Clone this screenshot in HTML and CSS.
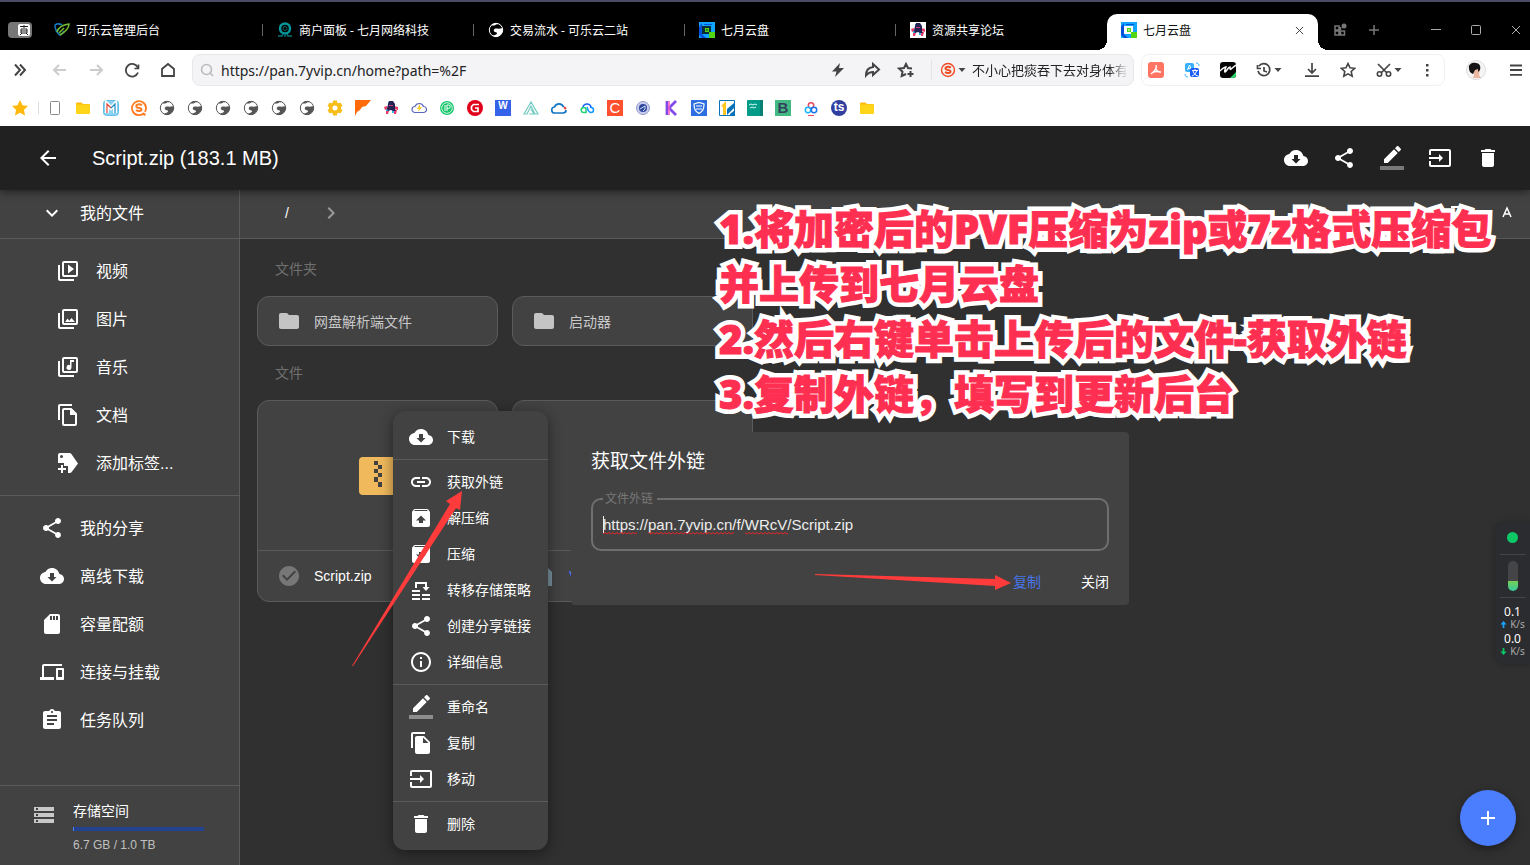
FILE: index.html
```html
<!DOCTYPE html>
<html lang="zh-CN">
<head>
<meta charset="utf-8">
<title>七月云盘</title>
<link rel="stylesheet" href="styles.css">
</head>
<body>
<svg class="sprite" aria-hidden="true">
  <symbol id="back" viewBox="0 0 24 24"><path d="M20 11H7.83l5.59-5.59L12 4l-8 8 8 8 1.41-1.41L7.83 13H20v-2z"/></symbol>
  <symbol id="cloud" viewBox="0 0 24 24"><path fill-rule="evenodd" d="M19.35 10.04C18.67 6.59 15.64 4 12 4 9.11 4 6.6 5.64 5.35 8.04 2.34 8.36 0 10.91 0 14c0 3.31 2.69 6 6 6h13c2.76 0 5-2.24 5-5 0-2.64-2.05-4.78-4.65-4.96zM16.5 13L12 17.5 7.5 13H10V9h4v4z"/></symbol>
  <symbol id="share" viewBox="0 0 24 24"><path d="M18 16.08c-.76 0-1.44.3-1.96.77L8.91 12.7c.05-.23.09-.46.09-.7s-.04-.47-.09-.7l7.05-4.11c.54.5 1.25.81 2.04.81 1.66 0 3-1.34 3-3s-1.34-3-3-3-3 1.34-3 3c0 .24.04.47.09.7L8.04 9.81C7.5 9.31 6.79 9 6 9c-1.66 0-3 1.34-3 3s1.34 3 3 3c.79 0 1.5-.31 2.04-.81l7.12 4.16c-.05.21-.08.43-.08.65 0 1.61 1.31 2.92 2.92 2.92s2.92-1.31 2.92-2.92-1.31-2.92-2.92-2.92z"/></symbol>
  <symbol id="rename" viewBox="0 0 24 24"><path d="M17.75 7L14 3.25l-10 10V17h3.75l10-10zm2.96-2.96c.39-.39.39-1.02 0-1.41L18.37.29c-.39-.39-1.02-.39-1.41 0L15 2.25 18.75 6l1.96-1.96z"/><path fill-opacity=".4" d="M0 20h24v4H0z"/></symbol>
  <symbol id="move" viewBox="0 0 24 24"><path d="M21 3H3c-1.1 0-2 .9-2 2v4h2V5h18v14H3v-4H1v4c0 1.1.9 2 2 2h18c1.1 0 2-.9 2-2V5c0-1.1-.9-2-2-2zM11 16l4-4-4-4v3H1v2h10v3z"/></symbol>
  <symbol id="trash" viewBox="0 0 24 24"><path d="M6 19c0 1.1.9 2 2 2h8c1.1 0 2-.9 2-2V7H6v12zM19 4h-3.5l-1-1h-5l-1 1H5v2h14V4z"/></symbol>
  <symbol id="down" viewBox="0 0 24 24"><path d="M7.41 8.59L12 13.17l4.59-4.58L18 10l-6 6-6-6z"/></symbol>
  <symbol id="right" viewBox="0 0 24 24"><path d="M10 6L8.59 7.41 13.17 12l-4.58 4.59L10 18l6-6z"/></symbol>
  <symbol id="folder" viewBox="0 0 24 24"><path d="M10 4H4c-1.1 0-2 .9-2 2v12c0 1.1.9 2 2 2h16c1.1 0 2-.9 2-2V8c0-1.1-.9-2-2-2h-8l-2-2z"/></symbol>
  <symbol id="video" viewBox="0 0 24 24"><path d="M4 6H2v14c0 1.1.9 2 2 2h14v-2H4z"/><rect x="7" y="3" width="14" height="14" rx="1" fill="none" stroke="currentColor" stroke-width="2"/><path d="M12 14.500V5.500l6 4.500z"/></symbol>
  <symbol id="image" viewBox="0 0 24 24"><path d="M4 6H2v14c0 1.100.9 2 2 2h14v-2H4z"/><rect x="7" y="3" width="14" height="14" rx="1" fill="none" stroke="currentColor" stroke-width="2"/><path d="M9 15l2.500-3.500 1.800 2.200L15.500 11l3.500 4z"/></symbol>
  <symbol id="music" viewBox="0 0 24 24"><path d="M4 6H2v14c0 1.100.9 2 2 2h14v-2H4z"/><rect x="7" y="3" width="14" height="14" rx="1" fill="none" stroke="currentColor" stroke-width="2"/><path d="M14 5h4v2h-2.500v5.500a2.500 2.500 0 1 1-1.500-2.300z"/></symbol>
  <symbol id="doc" viewBox="0 0 24 24"><path d="M16 1H4c-1.100 0-2 .9-2 2v14h2V3h12z"/><path d="M8 6h7l5 5v10a1 1 0 0 1-1 1H8a1 1 0 0 1-1-1V7a1 1 0 0 1 1-1z" fill="none" stroke="currentColor" stroke-width="2"/><path d="M14 6v6h6z"/></symbol>
  <symbol id="tag" viewBox="0 0 24 24"><path fill-rule="evenodd" d="M2 12V4c0-1.100.9-2 2-2h9.500c.7 0 1.300.3 1.700.8L22 12.500l-6.500 8.700c-.4.500-1 .8-1.700.8H12v-7H8v-3zM5.500 4a1.500 1.500 0 1 0 0 3 1.500 1.500 0 0 0 0-3z"/><path d="M5 14h2v3h3v2H7v3H5v-3H2v-2h3z"/></symbol>
  <symbol id="sd" viewBox="0 0 24 24"><path d="M18 2h-8L4 8v12c0 1.100.9 2 2 2h12c1.100 0 2-.9 2-2V4c0-1.100-.9-2-2-2zm-6 6h-2V4h2v4zm3 0h-2V4h2v4zm3 0h-2V4h2v4z"/></symbol>
  <symbol id="devices" viewBox="0 0 24 24"><path d="M4 6h18V4H4c-1.100 0-2 .9-2 2v11H0v3h14v-3H4V6zm19 2h-6c-.55 0-1 .45-1 1v10c0 .55.45 1 1 1h6c.55 0 1-.45 1-1V9c0-.55-.45-1-1-1zm-1 9h-4v-7h4v7z"/></symbol>
  <symbol id="tasks" viewBox="0 0 24 24"><path d="M19 3h-4.180C14.400 1.840 13.300 1 12 1s-2.400.84-2.820 2H5c-1.100 0-2 .9-2 2v14c0 1.100.9 2 2 2h14c1.100 0 2-.9 2-2V5c0-1.100-.9-2-2-2zm-7 0c.55 0 1 .45 1 1s-.45 1-1 1-1-.45-1-1 .45-1 1-1zm2 14H7v-2h7v2zm3-4H7v-2h10v2zm0-4H7V7h10v2z"/></symbol>
  <symbol id="storage" viewBox="0 0 24 24"><path d="M2 20h20v-4H2v4zm2-3h2v2H4v-2zM2 4v4h20V4H2zm4 3H4V5h2v2zm-4 7h20v-4H2v4zm2-3h2v2H4v-2z"/></symbol>
  <symbol id="link" viewBox="0 0 24 24"><path d="M3.900 12c0-1.710 1.390-3.100 3.100-3.100h4V7H7c-2.760 0-5 2.240-5 5s2.240 5 5 5h4v-1.900H7c-1.710 0-3.100-1.390-3.100-3.100zM8 13h8v-2H8v2zm9-6h-4v1.900h4c1.710 0 3.100 1.390 3.100 3.100s-1.390 3.100-3.100 3.100h-4V17h4c2.760 0 5-2.240 5-5s-2.240-5-5-5z"/></symbol>
  <symbol id="unzip" viewBox="0 0 24 24"><path fill-rule="evenodd" d="M20.550 5.220l-1.390-1.680C18.880 3.210 18.470 3 18 3H6c-.47 0-.88.210-1.150.55L3.460 5.220C3.170 5.570 3 6.010 3 6.500V19c0 1.100.9 2 2 2h14c1.100 0 2-.9 2-2V6.500c0-.49-.17-.93-.45-1.280zM12 9.500l5 5h-3V17h-4v-2.500H7zM5.120 5l.82-1h12l.93 1z"/></symbol>
  <symbol id="zip" viewBox="0 0 24 24"><path fill-rule="evenodd" d="M20.550 5.220l-1.390-1.680C18.880 3.210 18.470 3 18 3H6c-.47 0-.88.210-1.150.55L3.460 5.220C3.170 5.570 3 6.010 3 6.500V19c0 1.100.9 2 2 2h14c1.100 0 2-.9 2-2V6.500c0-.49-.17-.93-.45-1.280zM12 17.500l-5-5h3V10h4v2.500h3zM5.120 5l.82-1h12l.93 1z"/></symbol>
  <symbol id="transfer" viewBox="0 0 24 24"><path d="M3 20h8v2H3zM13 20h8v2h-8zM3 16h8v2H3zM13 16h8v2h-8zM3 12h8v2H3zM6 4h12v5h2.500L17 13l-3.500-4H16V6H8v4H6z"/></symbol>
  <symbol id="info" viewBox="0 0 24 24"><path d="M11 17h2v-6h-2v6zm1-15C6.480 2 2 6.480 2 12s4.480 10 10 10 10-4.480 10-10S17.520 2 12 2zm0 18c-4.410 0-8-3.590-8-8s3.590-8 8-8 8 3.590 8 8-3.590 8-8 8zM11 9h2V7h-2v2z"/></symbol>
  <symbol id="copy" viewBox="0 0 24 24"><path d="M16 1H4c-1.100 0-2 .9-2 2v14h2V3h12V1zm-1 4l6 6v10c0 1.100-.9 2-2 2H8c-1.100 0-2-.9-2-2V7c0-1.100.9-2 2-2h7zm-1 7h5.500L14 6.500V12z"/></symbol>
  <symbol id="check" viewBox="0 0 24 24"><path d="M12 2C6.480 2 2 6.480 2 12s4.480 10 10 10 10-4.480 10-10S17.520 2 12 2zm-2 15l-5-5 1.410-1.410L10 14.170l7.590-7.590L19 8l-9 9z"/></symbol>
  <symbol id="add" viewBox="0 0 24 24"><path d="M19 13h-6v6h-2v-6H5v-2h6V5h2v6h6v2z"/></symbol>
  <symbol id="globe" viewBox="0 0 16 16"><circle cx="8" cy="8" r="6.700" fill="none" stroke="currentColor" stroke-width="1"/><path d="M3 3.500C5 1.300 8.500.8 11 2c-2 .2-3 .3-4 1.200C5.800 4 4.500 3.400 3 3.500zM14.700 6.500c.5 4.500-3 8.300-7 8.200-1.500-.1-2.500-.6-3.500-1.300 2.500.2 4.200-.5 4.800-1.800.3-1-.8-1.200-2-1.500C5.500 9.700 5.300 8 6.500 7c1-.9 2.500-.4 4-.3 1.500.1 3-.8 4.200-.2z"/></symbol>
  <symbol id="pan" viewBox="0 0 16 16"><path fill="#12a5ff" d="M0 0h16v10h-5v6H0z"/><path fill="#0450d8" d="M0 5l3-4v11l4 4H3L0 13zM5 2h8v1H5z"/><path fill="var(--eye)" d="M3 4h9v8H3z"/><path fill="#52d512" d="M6 6h4v4H6zM10 10h6v6h-6z"/><path fill="var(--eye)" d="M7.300 7.300h1.400v1.400H7.300z"/></symbol>
  <symbol id="robot" viewBox="0 0 16 16"><path fill="#ec3a68" d="M1 7l3-1 1 3-3 1zM11 6l4 1v3l-3-1zM3 11h3l-1 3H3zM11 10h3l-1 4h-2z"/><path fill="#35b5ee" d="M5 2h5v2H5zM3 9h3v2H3zM9 10h2v3H9z"/><path fill="#252354" d="M6 1h4l2 3v5l1 2h-3l-2-1-3 1-1-2 1-5z"/><path fill="#c93c72" d="M6 5h4v1H6z"/></symbol>
  <symbol id="caret" viewBox="0 0 8 8"><path d="M.5 2h7L4 6z"/></symbol>
  <symbol id="bfolder" viewBox="0 0 16 16"><path fill="#ffb80f" d="M1 3.500a1 1 0 0 1 1-1h4.500L8 4h6a1 1 0 0 1 1 1v2H1z"/><rect x="1" y="4.500" width="14" height="9.500" rx="1" fill="#ffd519"/></symbol>
</svg>

<header class="browser">
  <div class="tabs">
    <svg class="workspace" viewBox="0 0 24 16"><rect width="24" height="16" rx="4" fill="#777"/><rect x="10" y="2" width="12" height="12" rx="2" fill="#fff"/><path d="M12 4.500h8M16 3v3M13 7h6v4h-6zM13 9h6M14 11l-2 2M18 11l2 2" fill="none" stroke="#222"/></svg>
    <div class="tab first"><svg class="fav" viewBox="0 0 16 16"><path d="M8 3C5 1 2 2 1 3c0 5 2 8 5 10 2-1 3-2 4-4" fill="none" stroke="#1577b8" stroke-width="1.600"/><path d="M3 10C4 6 8 3 15 2c0 5-4 8-9 11M5 11l5-5" fill="none" stroke="#74bb31" stroke-width="1.500"/></svg><span>可乐云管理后台</span></div>
    <div class="tab"><svg class="fav" viewBox="0 0 16 16"><circle cx="8" cy="6.500" r="5" fill="none" stroke="#06969b" stroke-width="2.500"/><circle cx="8" cy="6.500" r="2" fill="none" stroke="#05666b"/><path d="M1 14h4l1-2M15 14h-4l-1-2M7 14h2" fill="none" stroke="#067579" stroke-width="1.500"/></svg><span>商户面板 - 七月网络科技</span></div>
    <div class="tab"><svg class="fav white"><use href="#globe"/></svg><span>交易流水 - 可乐云二站</span></div>
    <div class="tab"><svg class="fav eye-dark"><use href="#pan"/></svg><span>七月云盘</span></div>
    <div class="tab"><svg class="fav robot"><use href="#robot"/></svg><span>资源共享论坛</span></div>
    <div class="tab active"><svg class="fav eye-light"><use href="#pan"/></svg><span>七月云盘</span><button class="plain close" aria-label="关闭标签"><svg viewBox="0 0 10 10"><path d="M1 1l8 8M9 1L1 9" stroke="#333" fill="none"/></svg></button></div>
    <div class="tabtools">
      <svg class="fav" viewBox="0 0 16 16"><path d="M3 4h4v4H3zM3 9h4v4H3zM8.500 9h4v4h-4zM8.500 8V5" fill="none" stroke="#777" stroke-width="1.500"/><circle cx="12" cy="4" r="2.500" fill="#777"/></svg>
      <svg class="fav" viewBox="0 0 16 16"><path d="M8 3v10M3 8h10" stroke="#777" stroke-width="1.500"/></svg>
    </div>
    <div class="wintools">
      <svg class="fav" viewBox="0 0 16 16"><path d="M3 7.500h10" stroke="#aaa"/></svg>
      <svg class="fav" viewBox="0 0 16 16"><rect x="3.500" y="3.500" width="9" height="9" rx="1" fill="none" stroke="#aaa"/></svg>
      <svg class="fav" viewBox="0 0 16 16"><path d="M4 4l8 8M12 4l-8 8" stroke="#aaa"/></svg>
    </div>
  </div>

  <div class="toolbar">
    <nav class="nav">
      <svg viewBox="0 0 20 20"><path d="M5 4.500l5 5.500-5 5.500M10 4.500l5 5.500-5 5.500" stroke-width="2"/></svg>
      <svg class="dim nav-back" viewBox="0 0 20 20"><path d="M16 10H5M9 5l-5 5 5 5"/></svg>
      <svg class="dim" viewBox="0 0 20 20"><path d="M4 10h11M11 5l5 5-5 5"/></svg>
      <svg viewBox="0 0 20 20"><path d="M16 8A6.300 6.300 0 1 0 16 12.500" stroke-width="1.800"/><path d="M12.500 8.500h4v-4" stroke-width="1.600"/></svg>
      <svg viewBox="0 0 20 20"><path d="M4 9v7h12V9l-6-5z" stroke-width="1.800"/></svg>
    </nav>
    <div class="address">
      <svg class="mag" viewBox="0 0 16 16"><circle cx="7.500" cy="7.500" r="5" fill="none" stroke="#bbb" stroke-width="1.600"/><path d="M11 11l3 3" stroke="#bbb" stroke-width="1.600"/></svg>
      <input class="url" aria-label="地址" value="https://pan.7yvip.cn/home?path=%2F">
      <div class="addricons">
        <svg viewBox="0 0 18 18"><path fill="#444" d="M11 2L3 10.500h4.500L6 16l9-9H10z"/></svg>
        <svg viewBox="0 0 18 18"><path d="M10 3l6 5.500-6 5.500v-3C7 11 5 12 3 14.500 3 10 5.500 6.500 10 6z"/></svg>
        <svg viewBox="0 0 18 18"><path d="M15 7.500L11 7 9 3 7 7l-5 .5 3.500 3.200-.8 4.300L9 13M13.500 10v6M10.500 13h6"/></svg>
      </div>
      <div class="search">
        <svg class="fav" viewBox="0 0 16 16"><circle cx="8" cy="8" r="6.500" fill="none" stroke="#f04b23" stroke-width="1.400"/><path d="M11 5.500C8 4 5 5 5.500 6.800 6 8.500 10.500 7.500 10.500 9.500S7 11.500 5 10.200" fill="none" stroke="#f04b23" stroke-width="2"/></svg>
        <svg class="caret"><use href="#caret"/></svg>
        <span class="hot">不小心把痰吞下去对身体有</span>
      </div>
    </div>
    <div class="ext">
      <svg viewBox="0 0 16 16"><rect width="16" height="16" rx="3" fill="#ff7463"/><path d="M8 3c1 2-.5 6-5 9M8 7c1 3 3 3 5 3M4 11c3-2 5-2 8-1" fill="none" stroke="#fff" stroke-width="1.400"/></svg>
      <svg viewBox="0 0 16 16"><rect x="1" y="1" width="9" height="9" rx="2" fill="#36b0ff"/><path d="M3.500 8l2-5 2 5M4 6.500h3" fill="none" stroke="#fff"/><path d="M12 1c2 0 3 1 3 3M1 12c0 2 1 3 3 3" fill="none" stroke="#36b0ff"/><rect x="6" y="6" width="9" height="9" rx="2" fill="#1a5cf5"/><path d="M8 8.500h6M11 7v1.500M12.500 9c-1 3-2 4-4.500 5M9 9c1 3 2 4 5 5" fill="none" stroke="#fff"/></svg>
      <svg viewBox="0 0 16 16"><rect width="16" height="16" rx="3" fill="#050505"/><path fill="#28d568" d="M16 10v3a3 3 0 0 1-3 3h-3z"/><path d="M0 9c3-3 4-4 6-4-1 2-2 4-1 5 2-1 3-5 5-5 0 2 0 3 1 2l5-4" fill="none" stroke="#fff" stroke-width="1.500"/></svg>
      <span class="pair"><svg viewBox="0 0 16 16"><path d="M3 4a6 6 0 1 1-1 5M1.500 3v3.500H5M8 5v4l3 1" fill="none" stroke="#444" stroke-width="1.700"/></svg><svg class="caret"><use href="#caret"/></svg></span>
      <svg viewBox="0 0 16 16"><path d="M8 1v10M4 7l4 4 4-4M1 14.200h14" fill="none" stroke="#444" stroke-width="1.700"/></svg>
      <svg viewBox="0 0 16 16"><path d="M8 1.500l2 4.300 4.700.5-3.500 3.200 1 4.700L8 11.800l-4.200 2.400 1-4.700L1.300 6.300 6 5.800z" fill="none" stroke="#444" stroke-width="1.600"/></svg>
      <span class="pair"><svg viewBox="0 0 16 16"><path d="M2 2l9 9M14 2l-9 9" stroke="#444" stroke-width="1.700"/><circle cx="3.500" cy="12" r="2.200" fill="none" stroke="#444" stroke-width="1.600"/><circle cx="12.500" cy="12" r="2.200" fill="none" stroke="#444" stroke-width="1.600"/></svg><svg class="caret"><use href="#caret"/></svg></span>
      <svg class="dots" viewBox="0 0 16 16"><path fill="#444" d="M7 2h2.500v2.500H7zM7 7h2.500v2.500H7zM7 12h2.500v2.500H7z"/></svg>
    </div>
    <div class="account">
      <svg class="avatar" viewBox="0 0 20 20"><circle cx="10" cy="10" r="9.500" fill="#f5f5f5" stroke="#ddd"/><path fill="#eab8a3" d="M6 9h8l-1 6 2 3H7l1-3z"/><path fill="#141414" d="M3 8c-1-4 4-6 7-5 4 0 5 4 4 7l-2 2V9l-3 1-2 4C4 13 3 11 3 8z"/></svg>
      <svg viewBox="0 0 16 16"><path d="M2 3.500h12M2 8h12M2 12.800h12" stroke="#444" stroke-width="1.800"/></svg>
    </div>
  </div>

  <div class="bookmarks">
    <svg class="star" viewBox="0 0 16 16"><path fill="#ffb90e" d="M8 0l2.500 5.200L16 6l-4 3.800 1 5.800-5-2.800-5 2.800 1-5.800L0 6l5.500-.8z"/></svg>
    <i class="sep"></i>
    <svg viewBox="0 0 16 16"><rect x="3.500" y="1.500" width="9" height="13" rx="1" fill="none" stroke="#888"/></svg>
    <svg><use href="#bfolder"/></svg>
    <svg viewBox="0 0 16 16"><rect x=".5" y=".5" width="15" height="15" rx="3" fill="#8ad3f3" stroke="#64bde8"/><path d="M4 13V4l4 4 4-4v9" fill="none" stroke="#fff" stroke-width="4"/><path d="M4 13V4l4 4" fill="none" stroke="#e0493b" stroke-width="1.200"/><path d="M8 8l4-4v9" fill="none" stroke="#1e8dc8" stroke-width="1.200"/></svg>
    <svg viewBox="0 0 16 16"><path d="M13 13A7 7 0 1 1 15 8c0 2-.5 3-1 4" fill="none" stroke="#ff7b22" stroke-width="1.800"/><circle cx="13.500" cy="14.500" r="1.200" fill="#ff7b22"/><path d="M11 5C7 3.500 4.500 5 5.500 7c1 1.500 5 .5 5 2.500 0 2-3.500 2-5.500.7" fill="none" stroke="#ff7b22" stroke-width="2"/></svg>
    <svg class="grey"><use href="#globe"/></svg><svg class="grey"><use href="#globe"/></svg><svg class="grey"><use href="#globe"/></svg><svg class="grey"><use href="#globe"/></svg><svg class="grey"><use href="#globe"/></svg><svg class="grey"><use href="#globe"/></svg>
    <svg viewBox="0 0 16 16"><circle cx="8" cy="8" r="4.300" fill="none" stroke="#f7bd19" stroke-width="3.600"/><path d="M8 .5v3M8 12.500v3M1.500 4.200l3 1.800M14.500 4.200l-3 1.800M1.500 11.800l3-1.800M14.500 11.800l-3-1.800" stroke="#f7bd19" stroke-width="4"/></svg>
    <svg viewBox="0 0 16 16"><path fill="#ff6b0b" d="M0 0h16l-5 6-4 1-2 3-3 2-2 4z"/></svg>
    <svg><use href="#robot"/></svg>
    <svg viewBox="0 0 16 16"><path d="M4 12.500a3 3 0 0 1 0-6 4.500 4.500 0 0 1 8.500 0 3 3 0 0 1 0 6z" fill="none" stroke="#5c68bd" stroke-width="1.200"/><path fill="#ffc928" d="M9 4l-3 5h2l-1 3 4-5H9z"/></svg>
    <svg viewBox="0 0 16 16"><circle cx="8" cy="8" r="7" fill="#14c76a"/><circle cx="8" cy="8" r="5.300" fill="none" stroke="#fff" stroke-width=".8"/><path d="M6 5v6M8 11V5h1.500a1.500 1.500 0 0 1 0 3.500H8" fill="none" stroke="#fff"/></svg>
    <svg viewBox="0 0 16 16"><circle cx="8" cy="8" r="8" fill="#e1001a"/><path d="M12 4.500H6.500L4.500 6.500v3L6.500 11.500H11V8H8" fill="none" stroke="#fff" stroke-width="1.700"/></svg>
    <span class="tile blue">W</span>
    <svg viewBox="0 0 16 16"><path d="M1 14L8 2l7 12h-3L8 6l-4 8zM8 9l3 5H6" fill="none" stroke="#73cbc2" stroke-width="1.200"/></svg>
    <svg viewBox="0 0 16 16"><path d="M4 13a3 3 0 0 1-.5-6A4.800 4.800 0 0 1 12.500 7" fill="none" stroke="#1276c4" stroke-width="1.700"/><path d="M4 13h8a3 3 0 0 0 3-3" fill="none" stroke="#1276c4" stroke-width="1.700"/><path d="M13 7l2 2" stroke="#e23b3b" stroke-width="2"/></svg>
    <svg viewBox="0 0 16 16"><path d="M4 8a4 4 0 0 1 8 0" fill="none" stroke="#1463ff" stroke-width="1.700"/><path d="M7 12.500H5A2.500 2.500 0 1 1 7 9z" fill="none" stroke="#20d174" stroke-width="1.600"/><path d="M8 7c1 3 1 5.500 4 5.500a2.500 2.500 0 0 0 0-5" fill="none" stroke="#159bff" stroke-width="1.600"/></svg>
    <span class="tile red">C</span>
    <svg viewBox="0 0 16 16"><circle cx="8" cy="8" r="6.500" fill="#c8cdea" stroke="#929bd0"/><circle cx="8" cy="8" r="4" fill="#31459c"/><path d="M5 9l5-3v3l-2 2" stroke="#c9e1fa" fill="none"/></svg>
    <svg viewBox="0 0 16 16"><path d="M4 1v14M13 1L6 8l7 7" fill="none" stroke="#824be6" stroke-width="2.800"/><path d="M6 1v14" stroke="#ff5dc2" stroke-width="1.500"/></svg>
    <svg viewBox="0 0 16 16"><path fill="#2d6fe0" d="M0 0h16v16H0z"/><path d="M3 4l5-1.500L13 4c0 5-1 7-5 9.500C4 11 3 9 3 4zM5 6h6M5 9h6" fill="none" stroke="#fff" stroke-width="1.200"/></svg>
    <svg viewBox="0 0 16 16"><path fill="#fff" stroke="#0872b9" d="M.5.5h15v15H.5z"/><path fill="#ffc71e" d="M2 6l5-5v14H4V7z"/><path fill="#0872b9" d="M15 3v5l-7 7V9zM11 14l5-4v6h-5z"/></svg>
    <svg viewBox="0 0 16 16"><rect width="16" height="16" rx="1" fill="#049b89"/><path d="M2 5l2-1 2 1 2-1 2 1M3 8l2-1 2 1 2-1" fill="none" stroke="#d5fff5" stroke-width="1"/><path fill="#077f74" d="M13 0h3v16h-3z"/></svg>
    <span class="tile green">B</span>
    <svg viewBox="0 0 16 16"><circle cx="8" cy="5.500" r="2.700" fill="none" stroke="#ee4861" stroke-width="1.500"/><circle cx="5" cy="10" r="2.700" fill="none" stroke="#1db4ff" stroke-width="1.500"/><circle cx="11" cy="10" r="2.700" fill="none" stroke="#1675eb" stroke-width="1.500"/><path d="M5 15.500h6" stroke="#ee4861"/></svg>
    <span class="tile navy">ts</span>
    <svg><use href="#bfolder"/></svg>
  </div>
</header>

<div class="appbar">
  <button class="plain" aria-label="返回"><svg class="ic"><use href="#back"/></svg></button>
  <h1>Script.zip (183.1 MB)</h1>
  <div class="actions">
    <button class="plain" aria-label="下载"><svg class="ic"><use href="#cloud"/></svg></button>
    <button class="plain" aria-label="分享"><svg class="ic"><use href="#share"/></svg></button>
    <button class="plain" aria-label="重命名"><svg class="ic"><use href="#rename"/></svg></button>
    <button class="plain" aria-label="移动"><svg class="ic"><use href="#move"/></svg></button>
    <button class="plain" aria-label="删除"><svg class="ic"><use href="#trash"/></svg></button>
  </div>
</div>

<div class="workarea">
  <aside class="sidebar">
    <a class="side root" href="#"><svg class="ic"><use href="#down"/></svg><span>我的文件</span></a>
    <nav class="group sub">
      <a class="side" href="#"><svg class="ic"><use href="#video"/></svg><span>视频</span></a>
      <a class="side" href="#"><svg class="ic"><use href="#image"/></svg><span>图片</span></a>
      <a class="side" href="#"><svg class="ic"><use href="#music"/></svg><span>音乐</span></a>
      <a class="side" href="#"><svg class="ic"><use href="#doc"/></svg><span>文档</span></a>
      <a class="side" href="#"><svg class="ic"><use href="#tag"/></svg><span>添加标签...</span></a>
    </nav>
    <nav class="group">
      <a class="side" href="#"><svg class="ic"><use href="#share"/></svg><span>我的分享</span></a>
      <a class="side" href="#"><svg class="ic"><use href="#cloud"/></svg><span>离线下载</span></a>
      <a class="side" href="#"><svg class="ic"><use href="#sd"/></svg><span>容量配额</span></a>
      <a class="side" href="#"><svg class="ic"><use href="#devices"/></svg><span>连接与挂载</span></a>
      <a class="side" href="#"><svg class="ic"><use href="#tasks"/></svg><span>任务队列</span></a>
    </nav>
    <div class="quota">
      <svg class="ic"><use href="#storage"/></svg>
      <div class="quota-info"><span>存储空间</span><div class="bar"><i></i></div><small>6.7 GB / 1.0 TB</small></div>
    </div>
  </aside>

  <main class="files">
    <div class="crumbs"><a href="#">/</a><svg class="ic"><use href="#right"/></svg>
      <div class="viewtools"><svg class="ic" viewBox="0 0 24 24"><path d="M3 5h8v2H3zM13 5h8v2h-8zM3 11h18v2H3z"/></svg><svg class="ic" viewBox="0 0 24 24"><path d="M11 16l4-9 4 9M12.500 13h5" fill="none" stroke="currentColor" stroke-width="1.500"/></svg></div>
    </div>
    <section class="listing">
      <h2>文件夹</h2>
      <div class="cards">
        <article class="card folder"><svg class="ic"><use href="#folder"/></svg>网盘解析端文件</article>
        <article class="card folder"><svg class="ic"><use href="#folder"/></svg>启动器</article>
      </div>
      <h2>文件</h2>
      <div class="cards">
        <article class="card file">
          <div class="preview"><svg class="archive" viewBox="0 0 38 38"><rect width="38" height="38" rx="4" fill="#f0b95c"/><path fill="#424242" d="M15 4h4v4h-4zM19 8h4v4h-4zM15 12h4v4h-4zM19 16h4v4h-4zM15 20h4v5h-4zM19 25h4v5h-4z"/></svg></div>
          <footer><svg class="ic chosen"><use href="#check"/></svg>Script.zip</footer>
        </article>
        <article class="card file">
          <div class="preview"></div>
          <footer><svg class="ic filedoc" viewBox="0 0 24 24"><path d="M6 2h8l6 6v14H4V4c0-1 1-2 2-2z"/></svg><a href="#">V</a></footer>
        </article>
      </div>
    </section>
  </main>
</div>

<div class="menu" role="menu">
  <button class="item"><svg class="ic"><use href="#cloud"/></svg><span>下载</span></button>
  <hr>
  <button class="item"><svg class="ic"><use href="#link"/></svg><span>获取外链</span></button>
  <button class="item"><svg class="ic"><use href="#unzip"/></svg><span>解压缩</span></button>
  <button class="item"><svg class="ic"><use href="#zip"/></svg><span>压缩</span></button>
  <button class="item"><svg class="ic"><use href="#transfer"/></svg><span>转移存储策略</span></button>
  <button class="item"><svg class="ic"><use href="#share"/></svg><span>创建分享链接</span></button>
  <button class="item"><svg class="ic"><use href="#info"/></svg><span>详细信息</span></button>
  <hr>
  <button class="item"><svg class="ic"><use href="#rename"/></svg><span>重命名</span></button>
  <button class="item"><svg class="ic"><use href="#copy"/></svg><span>复制</span></button>
  <button class="item"><svg class="ic"><use href="#move"/></svg><span>移动</span></button>
  <hr>
  <button class="item"><svg class="ic"><use href="#trash"/></svg><span>删除</span></button>
</div>

<div class="dialog" role="dialog" aria-labelledby="dlg">
  <h2 id="dlg">获取文件外链</h2>
  <fieldset>
    <legend><label for="outlink">文件外链</label></legend>
    <input id="outlink" value="https://pan.7yvip.cn/f/WRcV/Script.zip">
    <svg class="spell" viewBox="0 0 260 22">
      <defs><pattern id="wave" width="4" height="3" patternUnits="userSpaceOnUse"><path d="M0 2l2-1.500L4 2" fill="none" stroke="#e0262b"/></pattern></defs>
      <path d="M.5 2v17" stroke="#eee"/><path fill="url(#wave)" d="M0 18h34v3H0zM45 18h86v3H45zM142 18h43v3h-43z"/>
    </svg>
  </fieldset>
  <div class="dialog-actions"><button class="plain primary">复制</button><button class="plain">关闭</button></div>
</div>

<svg class="arrow arrow-menu" viewBox="0 0 112 176"><path fill="#ff3b3b" d="M110 0l-2 19-4-2L1 175H0L98 13l-4-3z"/></svg>
<svg class="arrow arrow-copy" viewBox="0 0 196 18"><path fill="#ff3b3b" d="M0 1l180 5V2l16 8-16 7v-4L0 2z"/></svg>

<div class="note">
  <p data-line="1.将加密后的PVF压缩为zip或7z格式压缩包">1.将加密后的PVF压缩为zip或7z格式压缩包</p>
  <p data-line="并上传到七月云盘">并上传到七月云盘</p>
  <p data-line="2.然后右键单击上传后的文件-获取外链">2.然后右键单击上传后的文件-获取外链</p>
  <p data-line="3.复制外链，填写到更新后台">3.复制外链，填写到更新后台</p>
</div>

<div class="monitor">
  <i class="dot"></i>
  <div class="gauge"><i></i></div>
  <div class="rate"><span>0.1</span><small><svg viewBox="0 0 8 8"><path fill="#18a4ff" d="M4 0l3.500 4H5v4H3V4H.5z"/></svg>K/s</small></div>
  <div class="rate"><span>0.0</span><small><svg viewBox="0 0 8 8"><path fill="#0cc866" d="M4 8l3.500-4H5V0H3v4H.5z"/></svg>K/s</small></div>
</div>
<button class="fab" aria-label="新建"><svg class="ic"><use href="#add"/></svg></button>
</body>
</html>
```

FILE: styles.css
```css
* { box-sizing: border-box; }
body {
  margin: 0;
  min-height: 100vh;
  display: flex;
  flex-direction: column;
  position: relative;
  overflow-x: hidden;
  background: #303030;
  color: #fff;
  font-family: "Liberation Sans", "Noto Sans CJK SC", sans-serif;
  font-size: 14px;
}
svg { flex: none; fill: currentColor; }
a { color: inherit; text-decoration: none; }
h1, h2, p { margin: 0; font-weight: 400; }
button { font: inherit; color: inherit; }
.sprite { position: absolute; width: 0; height: 0; }
.plain { border: 0; padding: 0; background: none; display: flex; }
.ic { width: 24px; height: 24px; }

/* browser chrome */
.browser { position: relative; z-index: 1; background: #fff; color: #222; font-family: "Noto Sans", "Noto Sans CJK SC", sans-serif; }
.tabs { display: flex; height: 50px; padding: 12px 6px 0 8px; background: #000; border-top: 2px solid #4b4b66; align-items: stretch; }
.workspace { width: 24px; height: 16px; align-self: center; margin: 0 8px 4px 0; }
.tab { flex: 0 1 211px; min-width: 0; display: flex; align-items: center; gap: 6px; padding: 0 14px 4px; color: #fff; font-size: 12px; white-space: nowrap; position: relative; }
.tab.first { flex-basis: 223px; }
.tab:not(.active)::after { content: ""; position: absolute; right: 0; top: 10px; height: 12px; width: 1px; background: #666; }
.tab:nth-last-child(4)::after { display: none; }
.fav { width: 16px; height: 16px; }
.white { color: #fff; }
.robot { background: #fff; }
.eye-dark { --eye: #062c3c; }
.eye-light { --eye: #fff; }
.tab.active { background: #fff; color: #111; border-radius: 10px 10px 0 0; }
.tab.active::before, .tab.active::after { content: ""; position: absolute; bottom: 0; width: 10px; height: 10px; }
.tab.active::before { left: -10px; background: radial-gradient(circle at 0 0, #000 10px, #fff 10px); }
.tab.active::after { right: -10px; background: radial-gradient(circle at 100% 0, #000 10px, #fff 10px); }
.close { margin-left: auto; }
.close svg { width: 9px; height: 9px; }
.tabtools, .wintools { display: flex; align-items: center; padding-bottom: 4px; }
.tabtools { gap: 18px; padding-left: 14px; }
.wintools { gap: 24px; margin-left: auto; }

.toolbar { display: flex; align-items: center; height: 40px; padding: 0 6px 0 10px; }
.nav { display: flex; gap: 16px; margin-right: 14px; }
.nav svg { width: 20px; height: 20px; fill: none; stroke: #444; }
.nav .dim { stroke: #ccc; stroke-width: 2; }
.nav-back { margin-left: 4px; }
.address { flex: 1; min-width: 0; display: flex; align-items: center; height: 32px; padding: 0 5px 0 6px; border: 1px solid #e8e8ec; border-radius: 8px; background: #f4f4f7; }
.mag { width: 16px; height: 16px; margin-right: 6px; }
.url { flex: 1; min-width: 0; border: 0; padding: 0; background: none; color: #222; font: 14px "Noto Sans", sans-serif; }
.addricons { display: flex; gap: 16px; margin-right: 16px; }
.addricons svg { width: 18px; height: 18px; fill: none; stroke: #444; stroke-width: 2; }
.addricons svg:first-child { stroke: none; }
.search { display: flex; align-items: center; border-left: 1px solid #e4e4e8; padding-left: 8px; }
.caret { width: 8px; height: 8px; color: #444; margin-left: 2px; }
.hot { margin-left: 6px; white-space: nowrap; font-size: 13px; line-height: 20px; mask-image: linear-gradient(90deg, #000 88%, transparent); }
.ext { display: flex; align-items: center; gap: 20px; height: 32px; margin-left: 7px; padding: 0 9px 0 6px; border: 1px solid #f0f0f2; border-radius: 8px; }
.ext svg { width: 16px; height: 16px; }
.ext .caret { width: 8px; height: 8px; }
.pair { display: flex; align-items: center; width: 28px; }
.ext .dots { margin-left: -5px; }
.account { display: flex; align-items: center; gap: 22px; margin-left: 21px; }
.account svg { width: 16px; height: 16px; }
.account .avatar { width: 20px; height: 20px; }

.bookmarks { display: flex; align-items: center; gap: 12px; height: 36px; padding: 0 12px; }
.bookmarks svg { width: 16px; height: 16px; }
.sep { width: 1px; height: 12px; margin: 0 -4px 0 -2px; background: #ddd; }
.bookmarks .grey { color: #555; }
.tile { width: 16px; height: 16px; flex: none; font: bold 12px/16px "Liberation Sans", sans-serif; text-align: center; color: #fff; }
.blue { background: #3462e8; font-size: 10px; line-height: 12px; }
.red { background: #ff512f; font-size: 15px; font-weight: 400; }
.green { background: #43b984; color: #34415d; font-size: 15px; }
.navy { background: #3140a0; border-radius: 8px; line-height: 15px; }

/* application bar */
.appbar { display: flex; align-items: center; height: 64px; padding: 0 30px 0 36px; background: #212121; box-shadow: 0 2px 8px rgba(0, 0, 0, .5); position: relative; }
.appbar h1 { margin-left: 32px; font-size: 20px; }
.actions { display: flex; gap: 24px; margin-left: auto; }

/* sidebar */
.workarea { flex: 1; display: flex; }
.sidebar { width: 240px; flex: none; display: flex; flex-direction: column; background: #424242; border-right: 1px solid #5b5b5b; }
.side { display: flex; align-items: center; gap: 16px; height: 48px; padding-left: 40px; font-size: 16px; }
.side span, .item span { padding-bottom: 2px; }
.root { height: 49px; border-bottom: 1px solid #5b5b5b; padding-bottom: 2px; }
.group { padding: 8px 0; }
.sub { border-bottom: 1px solid #5b5b5b; }
.sub .side { padding-left: 56px; }
.quota { margin-top: auto; height: 80px; display: flex; gap: 17px; padding: 15px 0 0 32px; border-top: 1px solid #5b5b5b; }
.quota .ic { margin-top: 2px; color: #c8c8c8; }
.quota-info { width: 131px; line-height: 20px; }
.quota-info span { display: block; }
.bar { height: 4px; margin: 6px 0 4px; background: #22418f; }
.bar i { display: block; width: 1px; height: 4px; background: #4b7dff; }
.quota-info small { display: block; font-size: 12px; color: #c0c0c0; }

/* file list */
.files { flex: 1; min-width: 0; }
.crumbs { display: flex; align-items: center; height: 49px; padding: 0 14px 3px 45px; background: #424242; border-bottom: 1px solid #5b5b5b; }
.crumbs > .ic { margin-left: 30px; color: #999; }
.viewtools { display: flex; gap: 20px; margin-left: auto; }
.listing { padding: 20px 17px; }
.listing h2 { padding-left: 18px; font-size: 14px; line-height: 20px; color: #707070; }
.cards { display: flex; gap: 14px; margin: 17px 0; }
.card { width: 241px; background: #424242; border: 1px solid #5b5b5b; border-radius: 12px; }
.folder { display: flex; align-items: center; gap: 13px; height: 50px; padding-left: 19px; color: #c8c8c8; }
.folder .ic { color: #c4c4c4; }
.file { height: 202px; display: flex; flex-direction: column; }
.preview { flex: 1; display: flex; align-items: center; justify-content: center; }
.archive { width: 38px; height: 38px; }
.file footer { display: flex; align-items: center; gap: 13px; height: 51px; padding-left: 19px; border-top: 1px solid #5b5b5b; }
.chosen { color: #777; }
.filedoc { color: #78909c; }
.file footer a { color: #4b7dff; }

/* context menu */
.menu { position: absolute; left: 393px; top: 411px; width: 155px; padding: 8px 0; background: #424242; border-radius: 12px; box-shadow: 0 3px 14px rgba(0, 0, 0, .45); }
.menu hr { margin: 4px 0; border: 0; height: 1px; background: #5b5b5b; }
.item { display: flex; align-items: center; gap: 14px; width: 100%; height: 36px; padding: 0 16px; border: 0; background: none; white-space: nowrap; }

/* link dialog */
.dialog { position: absolute; left: 571px; top: 432px; width: 558px; height: 173px; padding: 16px 20px; background: #424242; border-radius: 4px; }
.dialog h2 { font-size: 19px; line-height: 28px; }
.dialog fieldset { position: relative; margin: 15px 0 0; height: 60px; padding: 0 10px; border: 2px solid #6f6f6f; border-radius: 10px; }
.dialog legend { padding: 0 4px 0 2px; font-size: 12px; line-height: 16px; color: #777; }
.dialog input { display: block; width: 100%; height: 34px; border: 0; padding: 0; background: none; color: #eee; font: 15px "Liberation Sans", sans-serif; outline: 0; }
.spell { position: absolute; left: 10px; top: 7px; width: 260px; height: 22px; fill: none; }
.dialog-actions { display: flex; justify-content: flex-end; gap: 40px; margin-top: 21px; line-height: 20px; }
.primary { color: #4775e8; }

/* tutorial annotations */
.arrow { position: absolute; }
.arrow-menu { left: 352px; top: 491px; width: 112px; height: 176px; }
.arrow-copy { left: 815px; top: 573px; width: 196px; height: 18px; }
.note { position: absolute; left: 719px; top: 201px; isolation: isolate; color: #ff2f52; font: 900 40px/55px "Noto Sans", "Noto Sans CJK SC", sans-serif; white-space: nowrap; stroke-linejoin: round; }
.note p { position: relative; font-weight: 900; -webkit-text-stroke: 1px #ff2f52; }
.note p::before { content: attr(data-line); position: absolute; left: 0; top: 0; z-index: -1; -webkit-text-stroke: 10px #fff; }

/* floating widgets */
.monitor { position: absolute; right: 0; top: 522px; width: 35px; padding: 10px 0 5px; display: flex; flex-direction: column; align-items: center; background: #2b2c2f; border-radius: 10px 0 0 10px; box-shadow: 0 0 6px rgba(0, 0, 0, .25); }
.dot { width: 11px; height: 11px; border-radius: 50%; background: #0bc765; }
.gauge { width: 26px; margin: 11px 0 7px; padding: 6px 8px; border: 1px solid #3f4548; border-width: 1px 0; }
.gauge i { display: block; height: 30px; border-radius: 5px; background: linear-gradient(#454548 68%, #73cf58 68%, #36c7a0); }
.rate { display: flex; flex-direction: column; align-items: center; font: 12px/14px "Noto Sans", sans-serif; height: 27px; }
.rate small { display: flex; align-items: center; gap: 3px; font-size: 10px; line-height: 10px; color: #aaa; }
.rate svg { width: 7px; height: 7px; }
.fab { position: absolute; right: 14px; top: 790px; width: 56px; height: 56px; display: grid; place-items: center; border: 0; padding: 0; border-radius: 50%; background: #4b7dff; box-shadow: 0 3px 10px rgba(0, 0, 0, .4); }
```
